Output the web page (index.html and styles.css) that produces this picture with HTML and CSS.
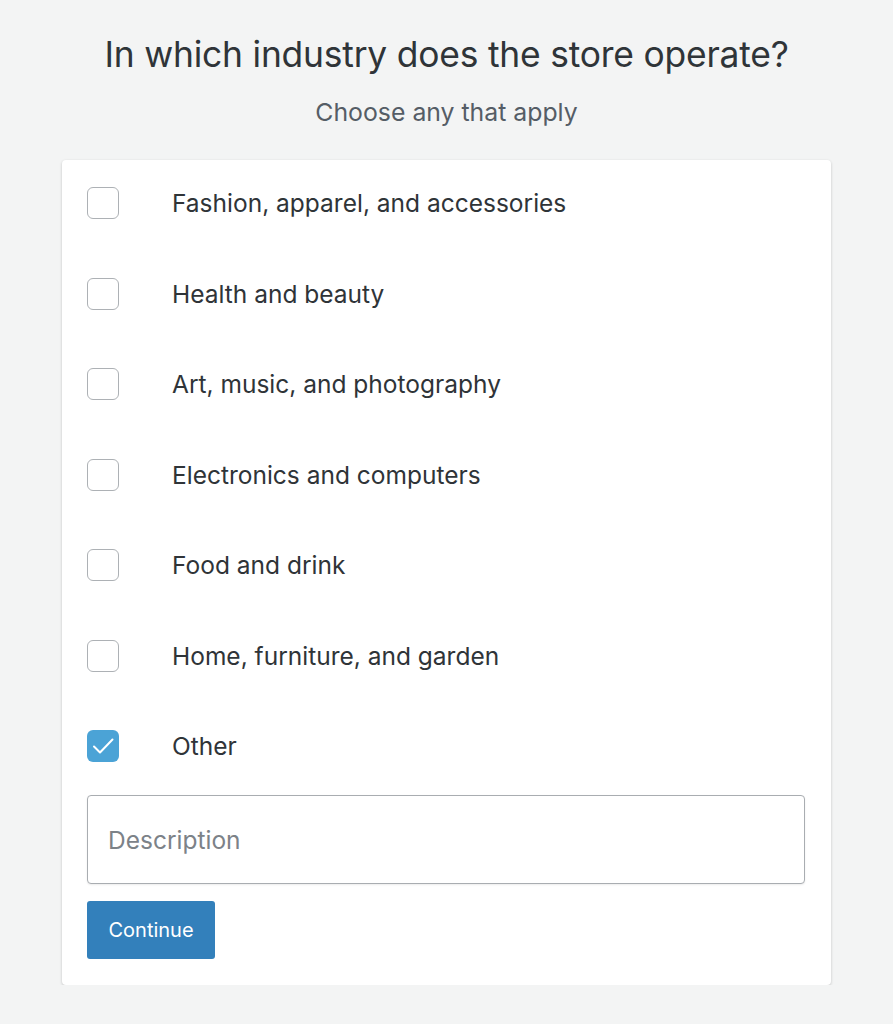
FILE: index.html
```html
<!DOCTYPE html>
<html lang="en">
<head>
    <meta charset="UTF-8">
    <meta name="viewport" content="width=device-width, initial-scale=1.0">
    <title>Store industry</title>
    <link rel="stylesheet" href="styles.css">
</head>
<body>
    <div class="step">
        <h1>In which industry does the store operate?</h1>
        <p class="hint">Choose any that apply</p>
        <div class="card">
            <label class="option"><span class="box"></span><span class="text">Fashion, apparel, and accessories</span></label>
            <label class="option"><span class="box"></span><span class="text">Health and beauty</span></label>
            <label class="option"><span class="box"></span><span class="text">Art, music, and photography</span></label>
            <label class="option"><span class="box"></span><span class="text">Electronics and computers</span></label>
            <label class="option"><span class="box"></span><span class="text">Food and drink</span></label>
            <label class="option"><span class="box"></span><span class="text">Home, furniture, and garden</span></label>
            <label class="option">
                <span class="box checked">
                    <svg viewBox="0 0 32 32" width="32" height="32"><path d="M7 16.5l6 6L25.5 9.5" fill="none" stroke="#fff" stroke-width="2" stroke-linecap="round" stroke-linejoin="round"/></svg>
                </span>
                <span class="text">Other</span>
            </label>
            <input class="description" type="text" placeholder="Description">
            <button class="continue">Continue</button>
        </div>
    </div>
</body>
</html>
```

FILE: styles.css
```css
body {
    font-family: Inter, "Noto Sans", sans-serif;
    margin: 0;
    padding: 0;
    background: #f3f4f4;
    color: #2f3438;
}
.step {
    width: 769px;
    margin: 0 auto;
    padding-top: 30px;
}
h1 {
    margin: 0;
    font-size: 35.4px;
    font-weight: 400;
    line-height: 50px;
    text-align: center;
    letter-spacing: -0.2px;
}
.hint {
    margin: 12px 0 0;
    font-size: 24.8px;
    line-height: 40px;
    color: #555d66;
    text-align: center;
}
.card {
    margin-top: 28px;
    background: #fff;
    border-radius: 4px;
    box-shadow: 0 1px 3px rgba(0, 0, 0, 0.2);
    padding: 0 26px 26px 25px;
    display: flex;
    flex-direction: column;
    align-items: flex-start;
}
.option {
    display: flex;
    align-items: flex-start;
    height: 90.5px;
    box-sizing: border-box;
    padding-top: 27px;
    cursor: pointer;
}
.box {
    width: 32px;
    height: 32px;
    box-sizing: border-box;
    border: 1.5px solid #adb1b5;
    border-radius: 6px;
    background: #fff;
}
.box.checked {
    border: none;
    background: #4ba3d6;
}
.box svg {
    display: block;
}
.text {
    margin-left: 53px;
    font-size: 24.5px;
    line-height: 32px;
}
.description {
    margin-top: 1.5px;
    width: 100%;
    height: 89px;
    box-sizing: border-box;
    border: 1.5px solid #a9adb1;
    border-radius: 4px;
    padding: 0 20px;
    font-family: inherit;
    font-size: 24.5px;
    color: #2f3438;
    box-shadow: 0 1px 2px rgba(0, 0, 0, 0.08);
}
.description::placeholder {
    color: #7c8288;
}
.continue {
    margin-top: 17px;
    height: 58px;
    padding: 0 21.5px;
    background: #3380bb;
    color: #fff;
    border: none;
    border-radius: 3px;
    font-family: inherit;
    font-size: 20px;
    cursor: pointer;
}
```
